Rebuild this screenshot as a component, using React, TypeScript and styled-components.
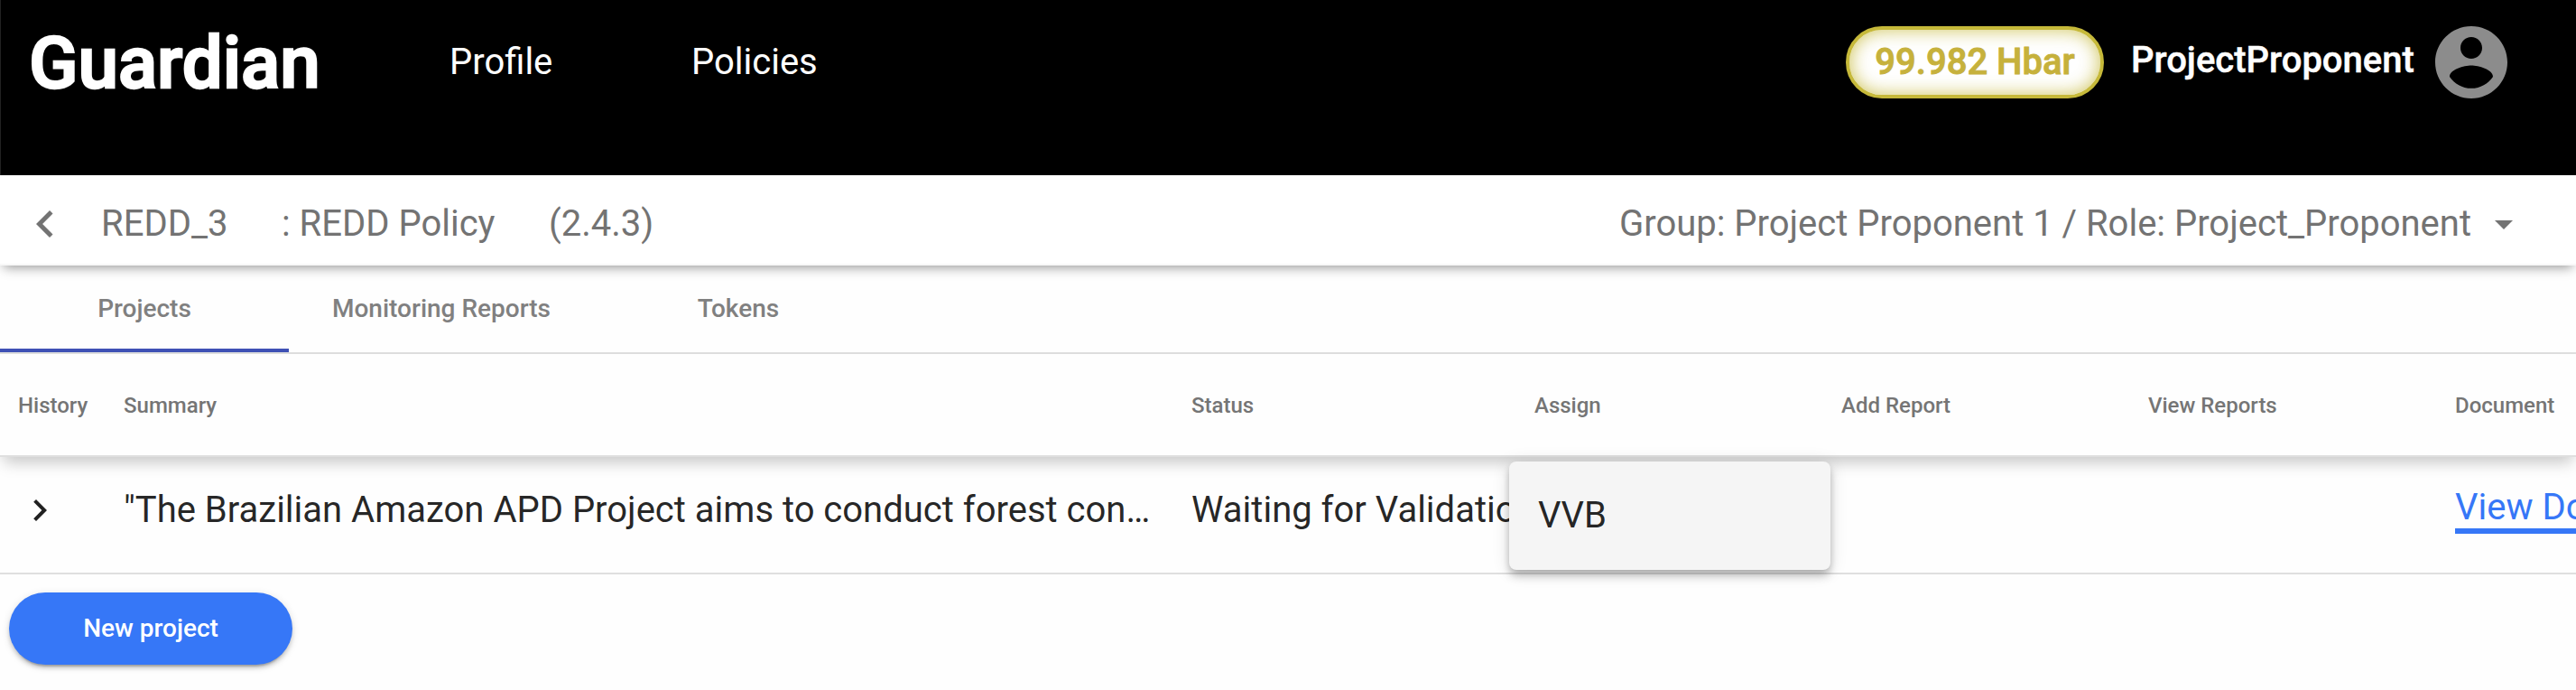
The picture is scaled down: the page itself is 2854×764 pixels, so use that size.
import React from 'react';
import styled, { createGlobalStyle } from 'styled-components';

const GlobalStyle = createGlobalStyle`
  *, *::before, *::after { box-sizing: border-box; }
  html, body { margin: 0; padding: 0; background: #fefefe; overflow: hidden; }
  body { font-family: Roboto, "Liberation Sans", sans-serif; font-size: 40px; color: rgba(0, 0, 0, 0.87); }
`;

const Page = styled.div`
  width: 2854px;
  height: 764px;
  overflow: hidden;
  display: flex;
  flex-direction: column;
`;

const Header = styled.header`
  flex: none;
  height: 194px;
  padding: 0 76px 56px 31px;
  border-left: 1px solid #222;
  background: #000;
  color: #fff;
  display: flex;
  align-items: center;
`;

const Brand = styled.div`
  width: 466px;
  padding-top: 1px;
  font-size: 80px;
  font-weight: 500;
  line-height: 136px;
  -webkit-text-stroke: 2.4px #fff;
`;

const Nav = styled.nav`
  display: flex;
`;

const NavLink = styled.a<{ $width: number }>`
  width: ${(p) => p.$width}px;
  line-height: 48px;
`;

const Account = styled.div`
  margin-left: auto;
  display: flex;
  align-items: center;
`;

const Balance = styled.div`
  width: 286px;
  height: 80px;
  margin-right: 30px;
  border: 4px solid #c6b93a;
  border-radius: 40px;
  background: #fff;
  box-shadow: inset 0 0 20px rgba(198, 185, 58, 0.85);
  color: #c6b13c;
  font-weight: 500;
  line-height: 72px;
  text-align: center;
  white-space: nowrap;
  -webkit-text-stroke: 0.9px #c6b13c;
`;

const UserName = styled.span`
  width: 329px;
  font-weight: 500;
  line-height: 48px;
  padding-bottom: 4px;
  -webkit-text-stroke: 0.5px #fff;
`;

const Avatar = styled.svg`
  width: 96px;
  height: 96px;
  margin-right: -8px;
  fill: #8c8c8c;
`;

const PolicyBar = styled.section`
  flex: none;
  position: relative;
  z-index: 1;
  height: 100px;
  padding: 8px 70px 0 20px;
  background: #fff;
  border-bottom: 2px solid #f8f8f8;
  box-shadow: 0 6px 12px -4px rgba(0, 0, 0, 0.42);
  color: #737373;
  display: flex;
  align-items: center;
`;

const BackIcon = styled.svg`
  width: 60px;
  height: 60px;
  margin: 2px 32px 0 0;
  fill: #737373;
`;

const PolicyPart = styled.span<{ $width: number }>`
  width: ${(p) => p.$width}px;
  white-space: nowrap;
`;

const GroupSelect = styled.div`
  margin-left: auto;
  display: flex;
  align-items: center;
`;

const Caret = styled.span`
  margin: 4px 0 0 26px;
  border: solid transparent;
  border-width: 10px 10px 0;
  border-top-color: #737373;
`;

const Tabs = styled.nav`
  flex: none;
  height: 98px;
  border-bottom: 2px solid #dfdfdf;
  background: #fefefe;
  display: flex;
`;

const Tab = styled.a<{ $active?: boolean }>`
  min-width: 320px;
  padding: 0 48px;
  border-bottom: 4px solid ${(p) => (p.$active ? '#3f51b5' : 'transparent')};
  color: #808080;
  font-size: 28px;
  font-weight: 500;
  line-height: 96px;
  text-align: center;
`;

const columns = '117px 1183px 380px 340px 340px 340px 340px';

const HeadRow = styled.div`
  flex: none;
  position: relative;
  height: 114px;
  padding: 2px 0 0 20px;
  border-bottom: 2px solid #dfdfdf;
  background: #fefefe;
  box-shadow: 0 10px 16px -4px rgba(0, 0, 0, 0.22);
  display: grid;
  grid-template-columns: ${columns};
  align-items: center;
  color: #757575;
  font-size: 24px;
  font-weight: 500;
`;

const BodyRow = styled.div`
  flex: none;
  position: relative;
  height: 130px;
  padding: 0 0 12px 20px;
  border-bottom: 2px solid #dfdfdf;
  display: grid;
  grid-template-columns: ${columns};
  align-items: center;
  white-space: nowrap;
`;

const Chevron = styled.svg`
  width: 48px;
  height: 48px;
  margin-top: 2px;
  fill: #212121;
`;

const Summary = styled.div`
  width: 1140px;
  overflow: hidden;
  text-overflow: ellipsis;
`;

const DocumentLink = styled.a`
  width: 268px;
  margin-top: 1px;
  border-bottom: 6px solid #3677f7;
  color: #3677f7;
  line-height: 47px;
`;

const AssignMenu = styled.div`
  position: absolute;
  left: 1672px;
  top: 5px;
  width: 356px;
  height: 120px;
  padding-left: 32px;
  border-radius: 8px;
  background: #f5f5f5;
  box-shadow: 0 4px 8px -2px rgba(0, 0, 0, 0.2), 0 8px 10px rgba(0, 0, 0, 0.14), 0 2px 20px rgba(0, 0, 0, 0.12);
  line-height: 119px;
`;

const Footer = styled.footer`
  flex: 1;
  padding: 20px 10px;
`;

const NewProject = styled.button`
  width: 314px;
  height: 80px;
  padding: 0;
  border: 0;
  border-radius: 40px;
  background: #3677f7;
  box-shadow: 0 6px 2px -4px rgba(0, 0, 0, 0.2), 0 4px 4px rgba(0, 0, 0, 0.14), 0 2px 10px rgba(0, 0, 0, 0.12);
  color: #fff;
  font: 500 28px/80px Roboto, "Liberation Sans", sans-serif;
  display: block;
`;

export default function App() {
  return (
    <Page>
      <GlobalStyle />
      <Header>
        <Brand>Guardian</Brand>
        <Nav>
          <NavLink $width={268}>Profile</NavLink>
          <NavLink $width={150}>Policies</NavLink>
        </Nav>
        <Account>
          <Balance>99.982 Hbar</Balance>
          <UserName>ProjectProponent</UserName>
          <Avatar viewBox="0 0 24 24">
            <path d="M12 2C6.48 2 2 6.48 2 12s4.48 10 10 10 10-4.48 10-10S17.52 2 12 2zm0 3c1.66 0 3 1.34 3 3s-1.34 3-3 3-3-1.34-3-3 1.34-3 3-3zm0 14.2c-2.5 0-4.71-1.28-6-3.22.03-1.99 4-3.08 6-3.08 1.99 0 5.97 1.09 6 3.08-1.29 1.94-3.5 3.22-6 3.22z" />
          </Avatar>
        </Account>
      </Header>
      <PolicyBar>
        <BackIcon viewBox="0 0 24 24">
          <path d="M15.41 7.41 14 6l-6 6 6 6 1.41-1.41L10.83 12z" />
        </BackIcon>
        <PolicyPart $width={200}>REDD_3</PolicyPart>
        <PolicyPart $width={296}>: REDD Policy</PolicyPart>
        <PolicyPart $width={150}>(2.4.3)</PolicyPart>
        <GroupSelect>
          Group: Project Proponent 1 / Role: Project_Proponent
          <Caret />
        </GroupSelect>
      </PolicyBar>
      <Tabs>
        <Tab $active>Projects</Tab>
        <Tab>Monitoring Reports</Tab>
        <Tab>Tokens</Tab>
      </Tabs>
      <HeadRow>
        <span>History</span>
        <span>Summary</span>
        <span>Status</span>
        <span>Assign</span>
        <span>Add Report</span>
        <span>View Reports</span>
        <span>Document</span>
      </HeadRow>
      <BodyRow>
        <Chevron viewBox="0 0 24 24">
          <path d="M8.59 16.59 13.17 12 8.59 7.41 10 6l6 6-6 6z" />
        </Chevron>
        <Summary>"The Brazilian Amazon APD Project aims to conduct forest conservation</Summary>
        <span>Waiting for Validation</span>
        <span />
        <span />
        <span />
        <DocumentLink>View Document</DocumentLink>
        <AssignMenu>VVB</AssignMenu>
      </BodyRow>
      <Footer>
        <NewProject>New project</NewProject>
      </Footer>
    </Page>
  );
}
